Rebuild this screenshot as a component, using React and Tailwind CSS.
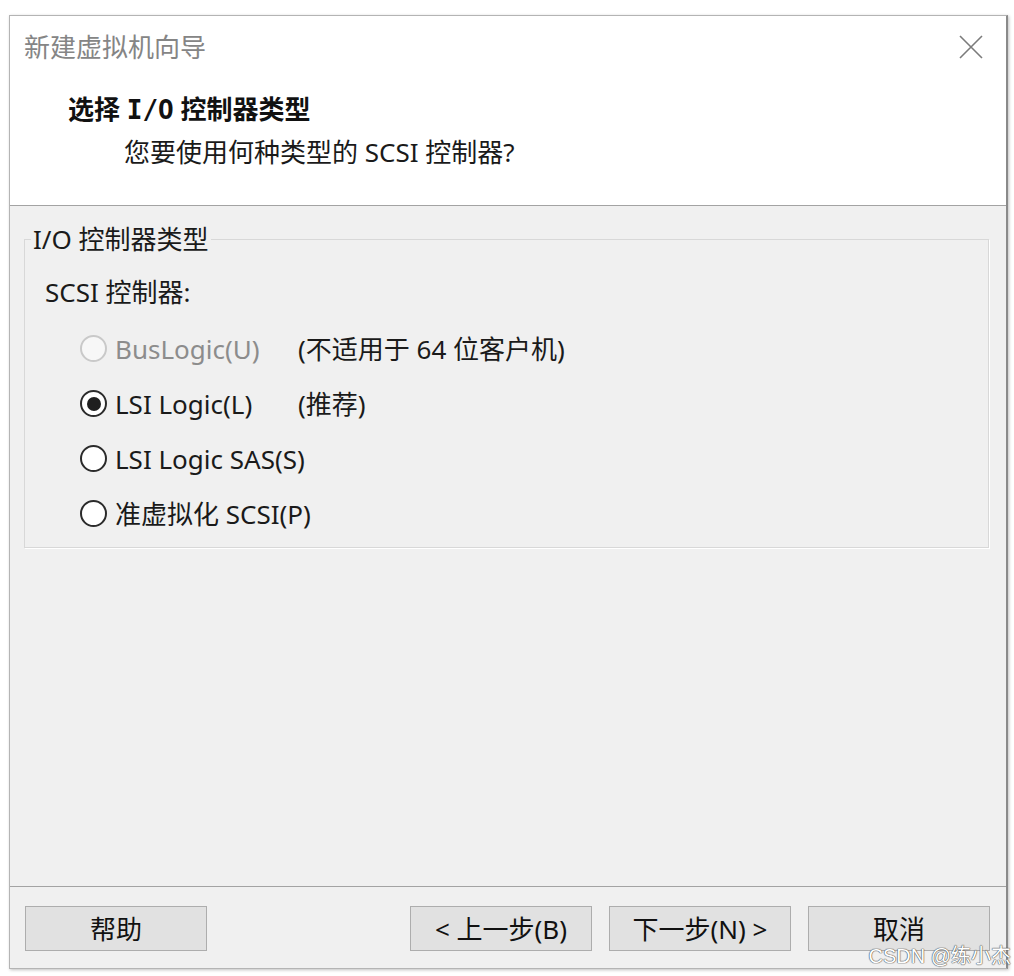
import React, { useState } from 'react';

const FONT = { fontFamily: '"Noto Sans", "Noto Sans CJK SC", sans-serif' };

const options = [
    { id: 'buslogic', label: 'BusLogic(U)', note: '(不适用于 64 位客户机)', disabled: true },
    { id: 'lsi', label: 'LSI Logic(L)', note: '(推荐)' },
    { id: 'lsisas', label: 'LSI Logic SAS(S)' },
    { id: 'pvscsi', label: '准虚拟化 SCSI(P)' },
];

const Radio = ({ checked, disabled }) => (
    <span
        className={`flex items-center justify-center w-[27px] h-[27px] rounded-full border-2 shrink-0 ${
            disabled ? 'border-[#c9c9c9] bg-[#f7f7f7]' : 'border-[#2b2b2b] bg-white'
        }`}
    >
        {checked && <span className="w-[14px] h-[14px] rounded-full bg-[#1f1f1f]" />}
    </span>
);

const WizardButton = ({ children }) => (
    <button className="w-[182px] h-[45px] bg-[#e1e1e1] border border-[#adadad] text-[26px] leading-[30px] text-[#111] whitespace-nowrap">
        {children}
    </button>
);

const App = () => {
    const [selected, setSelected] = useState('lsi');

    return (
        <div className="relative w-[1014px] h-[976px] bg-white overflow-hidden" style={FONT}>
            <div className="h-[15px]" />

            {/* Dialog */}
            <div className="ml-[9px] w-[999px] h-[954px] flex flex-col border border-[#b4b4b4] border-r-2 border-r-[#8a8a8a] shadow-[1px_1px_3px_rgba(0,0,0,0.25)]">
                {/* Header */}
                <div className="h-[190px] bg-white border-b border-[#a3a3a3] shrink-0">
                    <div className="h-[62px] flex items-center justify-between pl-[14px] pr-[23px]">
                        <span className="text-[26px] leading-[32px] text-[#858585]">新建虚拟机向导</span>
                        <svg width="24" height="24" viewBox="0 0 24 24" className="text-[#7b7b7b]">
                            <path d="M1 1L23 23M23 1L1 23" stroke="currentColor" strokeWidth="1.6" fill="none" />
                        </svg>
                    </div>
                    <div className="mt-[13px] pl-[58px] text-[26px] leading-[36px] font-bold text-[#111]">
                        选择 <span style={{ fontFamily: '"DejaVu Sans Mono", monospace' }}>I/O</span> 控制器类型
                    </div>
                    <div className="mt-[6px] pl-[114px] text-[26px] leading-[36px] text-[#1a1a1a]">
                        您要使用何种类型的 SCSI 控制器?
                    </div>
                </div>

                {/* Body */}
                <div className="h-[681px] bg-[#f0f0f0] border-b border-[#a3a3a3] shrink-0 pt-[19px] pl-[14px] pr-[17px]">
                    <fieldset className="border border-[#d8d8d8] shadow-[1px_1px_0_#ffffff] pb-[6px]">
                        <legend className="ml-[6px] px-[2px] text-[26px] leading-[28px] text-[#1a1a1a]">I/O 控制器类型</legend>
                        <div className="pl-[20px]">
                            <div className="mt-[24px] text-[26px] leading-[30px] text-[#1a1a1a]">SCSI 控制器:</div>
                            <div className="mt-[14px] ml-[35px]">
                                {options.map((opt) => (
                                    <div
                                        key={opt.id}
                                        className="h-[55px] grid grid-cols-[218px_auto] items-center text-[26px] leading-[30px]"
                                        onClick={() => !opt.disabled && setSelected(opt.id)}
                                    >
                                        <div className="flex items-center gap-[8px] whitespace-nowrap">
                                            <Radio checked={selected === opt.id} disabled={opt.disabled} />
                                            <span className={opt.disabled ? 'text-[#8c8c8c]' : 'text-[#1a1a1a]'}>
                                                {opt.label}
                                            </span>
                                        </div>
                                        <span className="text-[#1a1a1a] whitespace-nowrap">{opt.note}</span>
                                    </div>
                                ))}
                            </div>
                        </div>
                    </fieldset>
                </div>

                {/* Footer */}
                <div className="flex-1 bg-[#f0f0f0] flex items-start justify-between pt-[19px] pl-[15px] pr-[16px]">
                    <WizardButton>帮助</WizardButton>
                    <div className="flex gap-[17px]">
                        <WizardButton>&lt; 上一步(B)</WizardButton>
                        <WizardButton>下一步(N) &gt;</WizardButton>
                        <WizardButton>取消</WizardButton>
                    </div>
                </div>
            </div>

            {/* Watermark */}
            <div
                className="absolute right-[3px] top-[943px] text-[20px] leading-[26px] text-white [text-shadow:0_0_1px_#555,0_0_1px_#555,0_0_1px_#555]"
                style={{ fontFamily: '"Liberation Sans", "Noto Sans CJK SC", sans-serif' }}
            >
                CSDN @练小杰
            </div>
        </div>
    );
};

export default App;
